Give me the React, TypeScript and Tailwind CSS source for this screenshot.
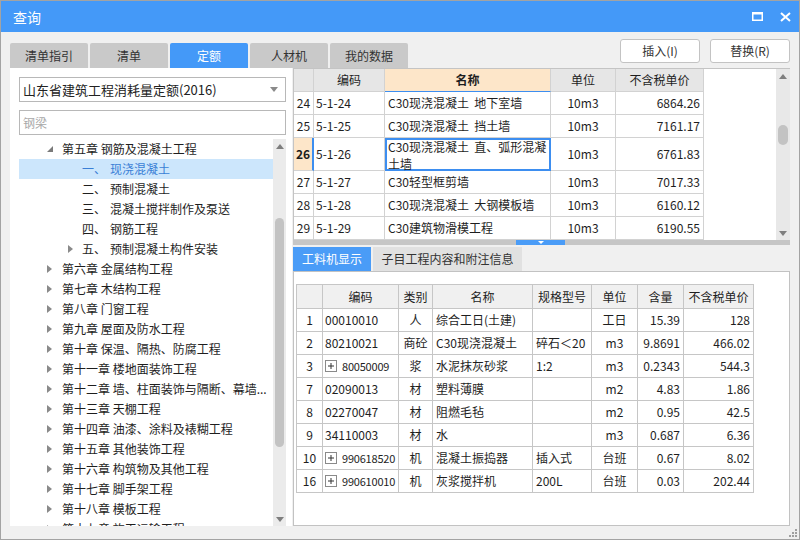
import React from "react";

type TreeRow = { level: 0 | 1; label: string; prefix?: string; arrow?: "open" | "closed" | "none"; selected?: boolean };

const treeRows: TreeRow[] = [
  { level: 0, label: "第五章 钢筋及混凝土工程", arrow: "open" },
  { level: 1, prefix: "一、", label: "现浇混凝土", arrow: "none", selected: true },
  { level: 1, prefix: "二、", label: "预制混凝土", arrow: "none" },
  { level: 1, prefix: "三、", label: "混凝土搅拌制作及泵送", arrow: "none" },
  { level: 1, prefix: "四、", label: "钢筋工程", arrow: "none" },
  { level: 1, prefix: "五、", label: "预制混凝土构件安装", arrow: "closed" },
  { level: 0, label: "第六章 金属结构工程", arrow: "closed" },
  { level: 0, label: "第七章 木结构工程", arrow: "closed" },
  { level: 0, label: "第八章 门窗工程", arrow: "closed" },
  { level: 0, label: "第九章 屋面及防水工程", arrow: "closed" },
  { level: 0, label: "第十章 保温、隔热、防腐工程", arrow: "closed" },
  { level: 0, label: "第十一章 楼地面装饰工程", arrow: "closed" },
  { level: 0, label: "第十二章 墙、柱面装饰与隔断、幕墙...", arrow: "closed" },
  { level: 0, label: "第十三章 天棚工程", arrow: "closed" },
  { level: 0, label: "第十四章 油漆、涂料及裱糊工程", arrow: "closed" },
  { level: 0, label: "第十五章 其他装饰工程", arrow: "closed" },
  { level: 0, label: "第十六章 构筑物及其他工程", arrow: "closed" },
  { level: 0, label: "第十七章 脚手架工程", arrow: "closed" },
  { level: 0, label: "第十八章 模板工程", arrow: "closed" },
  { level: 0, label: "第十九章 施工运输工程", arrow: "closed" },
];

const quotaRows = [
  { no: "24", code: "5-1-24", name: ["C30现浇混凝土  地下室墙"], unit: "10m3", price: "6864.26" },
  { no: "25", code: "5-1-25", name: ["C30现浇混凝土  挡土墙"], unit: "10m3", price: "7161.17" },
  { no: "26", code: "5-1-26", name: ["C30现浇混凝土  直、弧形混凝", "土墙"], unit: "10m3", price: "6761.83", current: true },
  { no: "27", code: "5-1-27", name: ["C30轻型框剪墙"], unit: "10m3", price: "7017.33" },
  { no: "28", code: "5-1-28", name: ["C30现浇混凝土  大钢模板墙"], unit: "10m3", price: "6160.12" },
  { no: "29", code: "5-1-29", name: ["C30建筑物滑模工程"], unit: "10m3", price: "6190.55" },
];

const resRows = [
  { no: "1", code: "00010010", kind: "人", name: "综合工日(土建)", spec: "", unit: "工日", qty: "15.39", price: "128" },
  { no: "2", code: "80210021", kind: "商砼", name: "C30现浇混凝土", spec: "碎石＜20", unit: "m3", qty: "9.8691", price: "466.02" },
  { no: "3", code: "80050009", kind: "浆", name: "水泥抹灰砂浆", spec: "1:2", unit: "m3", qty: "0.2343", price: "544.3", plus: true },
  { no: "7", code: "02090013", kind: "材", name: "塑料薄膜", spec: "", unit: "m2", qty: "4.83", price: "1.86" },
  { no: "8", code: "02270047", kind: "材", name: "阻燃毛毡", spec: "", unit: "m2", qty: "0.95", price: "42.5" },
  { no: "9", code: "34110003", kind: "材", name: "水", spec: "", unit: "m3", qty: "0.687", price: "6.36" },
  { no: "10", code: "990618520", kind: "机", name: "混凝土振捣器", spec: "插入式", unit: "台班", qty: "0.67", price: "8.02", plus: true },
  { no: "16", code: "990610010", kind: "机", name: "灰浆搅拌机", spec: "200L", unit: "台班", qty: "0.03", price: "202.44", plus: true },
];

const tabs = ["清单指引", "清单", "定额", "人材机", "我的数据"];

const ArrowUp = () => (
  <svg width="8" height="5" viewBox="0 0 8 5">
    <polygon points="0,5 4,0 8,5" fill="#7e7e7e" />
  </svg>
);

const ArrowDown = ({ color = "#7e7e7e" }: { color?: string }) => (
  <svg width="8" height="5" viewBox="0 0 8 5">
    <polygon points="0,0 8,0 4,5" fill={color} />
  </svg>
);

const PlusBox = () => (
  <svg width="12" height="12" viewBox="0 0 12 12" className="shrink-0">
    <rect x="0.5" y="0.5" width="11" height="11" fill="white" stroke="#8a8a8a" />
    <line x1="3" y1="6" x2="9" y2="6" stroke="#333" />
    <line x1="6" y1="3" x2="6" y2="9" stroke="#333" />
  </svg>
);

function TreeArrow({ kind }: { kind?: "open" | "closed" | "none" }) {
  if (kind === "open")
    return (
      <svg width="6" height="6" viewBox="0 0 6 6">
        <polygon points="6,0 6,6 0,6" fill="#7a7a7a" />
      </svg>
    );
  if (kind === "closed")
    return (
      <svg width="5" height="8" viewBox="0 0 5 8">
        <polygon points="0,0 5,4 0,8" fill="#8a8a8a" />
      </svg>
    );
  return null;
}

export default function App() {
  return (
    <div className="w-[800px] h-[540px] flex flex-col border border-[#a3a3a3] bg-[#f0f0f0] overflow-hidden text-[#1e1e1e] font-['Noto_Sans_CJK_SC','Noto_Sans',sans-serif]">
      {/* title bar */}
      <div className="h-[31px] shrink-0 bg-[#4499f8] flex items-center pl-[12px] pr-[8px]">
        <span className="text-[14px] text-white leading-none">查询</span>
        <div className="ml-auto flex items-center gap-[17px]">
          <svg width="11" height="9" viewBox="0 0 11 9">
            <rect x="0.75" y="0.75" width="9.5" height="7.5" fill="none" stroke="white" strokeWidth="1.5" />
            <rect x="0" y="0" width="11" height="2.5" fill="white" />
          </svg>
          <svg width="11" height="10" viewBox="0 0 11 10">
            <path d="M1 1 L10 9 M10 1 L1 9" stroke="white" strokeWidth="2" />
          </svg>
        </div>
      </div>

      <div className="flex-1 flex flex-col px-[9px]">
        {/* tabs + buttons */}
        <div className="h-[36px] shrink-0 flex items-end">
          {tabs.map((t) => (
            <div
              key={t}
              className={
                t === "定额"
                  ? "w-[78px] h-[25px] mr-[2px] rounded-t-[2px] bg-[#4499f8] text-white text-[12px] flex items-center justify-center"
                  : "w-[78px] h-[25px] mr-[2px] rounded-t-[2px] bg-[#c9c9c9] text-[#333] text-[12px] flex items-center justify-center"
              }
            >
              {t}
            </div>
          ))}
          <div className="ml-auto self-start mt-[7px] flex gap-[10px]">
            <button className="w-[80px] h-[24px] bg-white border border-[#c3c3c3] rounded-[3px] text-[12px] text-[#333]">插入(I)</button>
            <button className="w-[80px] h-[24px] bg-white border border-[#c3c3c3] rounded-[3px] text-[12px] text-[#333]">替换(R)</button>
          </div>
        </div>

        {/* main */}
        <div className="h-[458px] shrink-0 flex gap-px">
          {/* left panel */}
          <div className="w-[282px] bg-white flex flex-col pl-[9px] pr-[6px] pt-[9px]">
            <div className="h-[25px] shrink-0 border border-[#b8b8b8] flex items-center pl-[3px] pr-[7px] text-[13px] text-[#222]">
              <span>山东省建筑工程消耗量定额(2016)</span>
              <span className="ml-auto">
                <ArrowDown color="#8a8a8a" />
              </span>
            </div>
            <div className="mt-[8px] h-[25px] shrink-0 border border-[#b8b8b8] flex items-center pl-[3px] text-[12px] text-[#a8a8a8]">钢梁</div>
            <div className="mt-[4px] flex-1 flex overflow-hidden">
              <div className="w-[254px] flex flex-col">
                {treeRows.map((r, i) =>
                  r.level === 0 ? (
                    <div key={i} className="h-[20px] shrink-0 flex items-center pl-[28px] text-[12px] text-[#1e1e1e]">
                      <span className="w-[15px] flex items-center">
                        <TreeArrow kind={r.arrow} />
                      </span>
                      <span className="whitespace-nowrap">{r.label}</span>
                    </div>
                  ) : (
                    <div
                      key={i}
                      className={
                        r.selected
                          ? "h-[20px] shrink-0 flex items-center pl-[49px] text-[12px] bg-[#cce6fc] text-[#3a7fd6]"
                          : "h-[20px] shrink-0 flex items-center pl-[49px] text-[12px] text-[#1e1e1e]"
                      }
                    >
                      <span className="w-[14px] flex items-center">
                        <TreeArrow kind={r.arrow} />
                      </span>
                      <span className="w-[28px]">{r.prefix}</span>
                      <span className="whitespace-nowrap">{r.label}</span>
                    </div>
                  )
                )}
              </div>
              <div className="w-[13px] bg-[#ebebeb] flex flex-col items-center">
                <div className="h-[14px] flex items-center justify-center">
                  <ArrowUp />
                </div>
                <div className="mt-[65px] h-[229px] w-[9px] rounded-full bg-[#c3c3c3]" />
                <div className="flex-1" />
                <div className="h-[14px] flex items-center justify-center">
                  <ArrowDown />
                </div>
              </div>
            </div>
          </div>

          {/* right column */}
          <div className="w-[497px] flex flex-col">
            <div className="h-[172px] shrink-0 flex border-l border-t border-[#c4c4c4] bg-white overflow-hidden">
              <div className="flex-1 flex flex-col text-[12px]">
                <div className="h-[23px] shrink-0 flex">
                  <div className="w-[20px] border-r border-b border-[#d2d2d2] bg-[#e6e6e6]" />
                  <div className="w-[71px] border-r border-b border-[#d2d2d2] bg-[#e6e6e6] flex items-center justify-center">编码</div>
                  <div className="w-[166px] border-r border-[#d2d2d2] border-b border-b-[#3d8ef0] bg-[#fde6c9] font-bold flex items-center justify-center">名称</div>
                  <div className="w-[65px] border-r border-b border-[#d2d2d2] bg-[#e6e6e6] flex items-center justify-center">单位</div>
                  <div className="w-[88px] border-r border-b border-[#d2d2d2] bg-[#e6e6e6] flex items-center justify-center">不含税单价</div>
                </div>
                {quotaRows.map((r) => (
                  <div key={r.no} className={r.current ? "h-[33px] shrink-0 flex" : "h-[23px] shrink-0 flex"}>
                    <div
                      className={
                        r.current
                          ? "w-[20px] border-r-2 border-r-[#3d8ef0] border-b border-b-[#d2d2d2] bg-[#fde6c9] font-bold flex items-center justify-center"
                          : "w-[20px] border-r border-b border-[#d2d2d2] flex items-center justify-center"
                      }
                    >
                      {r.no}
                    </div>
                    <div className="w-[71px] border-r border-b border-[#d2d2d2] flex items-center pl-[2px]">{r.code}</div>
                    <div
                      className={
                        r.current
                          ? "w-[166px] border-2 border-[#3d8ef0] flex flex-col justify-center pl-[1px] leading-[17px] whitespace-pre"
                          : "w-[166px] border-r border-b border-[#d2d2d2] flex items-center pl-[3px] whitespace-pre"
                      }
                    >
                      {r.name.map((n) => (
                        <span key={n} className={r.current ? "block h-[17px] shrink-0 leading-[17px]" : ""}>
                          {n}
                        </span>
                      ))}
                    </div>
                    <div className="w-[65px] border-r border-b border-[#d2d2d2] flex items-center justify-center">{r.unit}</div>
                    <div className="w-[88px] border-r border-b border-[#d2d2d2] flex items-center justify-end pr-[3px]">{r.price}</div>
                  </div>
                ))}
              </div>
              <div className="w-[14px] bg-[#e8e8e8] flex flex-col items-center">
                <div className="h-[14px] flex items-center justify-center">
                  <ArrowUp />
                </div>
                <div className="mt-[42px] h-[20px] w-[10px] rounded-full bg-[#c3c3c3]" />
                <div className="flex-1" />
                <div className="h-[14px] flex items-center justify-center">
                  <ArrowDown />
                </div>
              </div>
            </div>

            {/* splitter */}
            <div className="h-[5px] shrink-0 bg-[#c6c6c6] flex">
              <div className="ml-[223px] w-[49px] h-full bg-[#4a9cf7] flex items-center justify-center">
                <svg width="6" height="3" viewBox="0 0 6 3">
                  <polygon points="0,0 6,0 3,3" fill="white" />
                </svg>
              </div>
            </div>

            {/* lower tabs */}
            <div className="mt-[2px] h-[24px] shrink-0 flex gap-[2px] text-[12px]">
              <div className="w-[78px] bg-[#4a9cf7] text-white flex items-center justify-center">工料机显示</div>
              <div className="w-[149px] bg-[#e1e1e1] text-[#333] flex items-center justify-center">子目工程内容和附注信息</div>
            </div>

            {/* lower panel */}
            <div className="flex-1 border border-[#c2c2c2] bg-white pl-[2px] pt-[12px]">
              <div className="w-[458px] border-l border-t border-[#c6c6c6] text-[12px] flex flex-col">
                <div className="h-[24px] flex bg-[#f0f0f0]">
                  <div className="w-[26px] border-r border-b border-[#c6c6c6]" />
                  <div className="w-[76px] border-r border-b border-[#c6c6c6] flex items-center justify-center">编码</div>
                  <div className="w-[34px] border-r border-b border-[#c6c6c6] flex items-center justify-center">类别</div>
                  <div className="w-[100px] border-r border-b border-[#c6c6c6] flex items-center justify-center">名称</div>
                  <div className="w-[59px] border-r border-b border-[#c6c6c6] flex items-center justify-center">规格型号</div>
                  <div className="w-[46px] border-r border-b border-[#c6c6c6] flex items-center justify-center">单位</div>
                  <div className="w-[46px] border-r border-b border-[#c6c6c6] flex items-center justify-center">含量</div>
                  <div className="w-[70px] border-r border-b border-[#c6c6c6] flex items-center justify-center">不含税单价</div>
                </div>
                {resRows.map((r) => (
                  <div key={r.no} className="h-[23px] flex">
                    <div className="w-[26px] border-r border-b border-[#c6c6c6] flex items-center justify-center">{r.no}</div>
                    <div className="w-[76px] border-r border-b border-[#c6c6c6] flex items-center pl-[2px] overflow-hidden">
                      {r.plus ? (
                        <>
                          <PlusBox />
                          <span className="ml-[5px] text-[11px] tracking-[-0.2px] whitespace-nowrap">{r.code}</span>
                        </>
                      ) : (
                        r.code
                      )}
                    </div>
                    <div className="w-[34px] border-r border-b border-[#c6c6c6] flex items-center justify-center">{r.kind}</div>
                    <div className="w-[100px] border-r border-b border-[#c6c6c6] flex items-center pl-[3px] whitespace-nowrap">{r.name}</div>
                    <div className="w-[59px] border-r border-b border-[#c6c6c6] flex items-center pl-[3px] whitespace-nowrap">{r.spec}</div>
                    <div className="w-[46px] border-r border-b border-[#c6c6c6] flex items-center justify-center">{r.unit}</div>
                    <div className="w-[46px] border-r border-b border-[#c6c6c6] flex items-center justify-end pr-[3px]">{r.qty}</div>
                    <div className="w-[70px] border-r border-b border-[#c6c6c6] flex items-center justify-end pr-[3px]">{r.price}</div>
                  </div>
                ))}
              </div>
            </div>
          </div>
        </div>

        {/* bottom strip with grip */}
        <div className="flex-1 flex justify-end items-end pb-[2px] -mr-[7px]">
          <svg width="8" height="8" viewBox="0 0 8 8">
            <rect x="6" y="0" width="2" height="2" fill="#a0a0a0" />
            <rect x="3" y="3" width="2" height="2" fill="#a0a0a0" />
            <rect x="6" y="3" width="2" height="2" fill="#a0a0a0" />
            <rect x="0" y="6" width="2" height="2" fill="#a0a0a0" />
            <rect x="3" y="6" width="2" height="2" fill="#a0a0a0" />
            <rect x="6" y="6" width="2" height="2" fill="#a0a0a0" />
          </svg>
        </div>
      </div>
    </div>
  );
}
